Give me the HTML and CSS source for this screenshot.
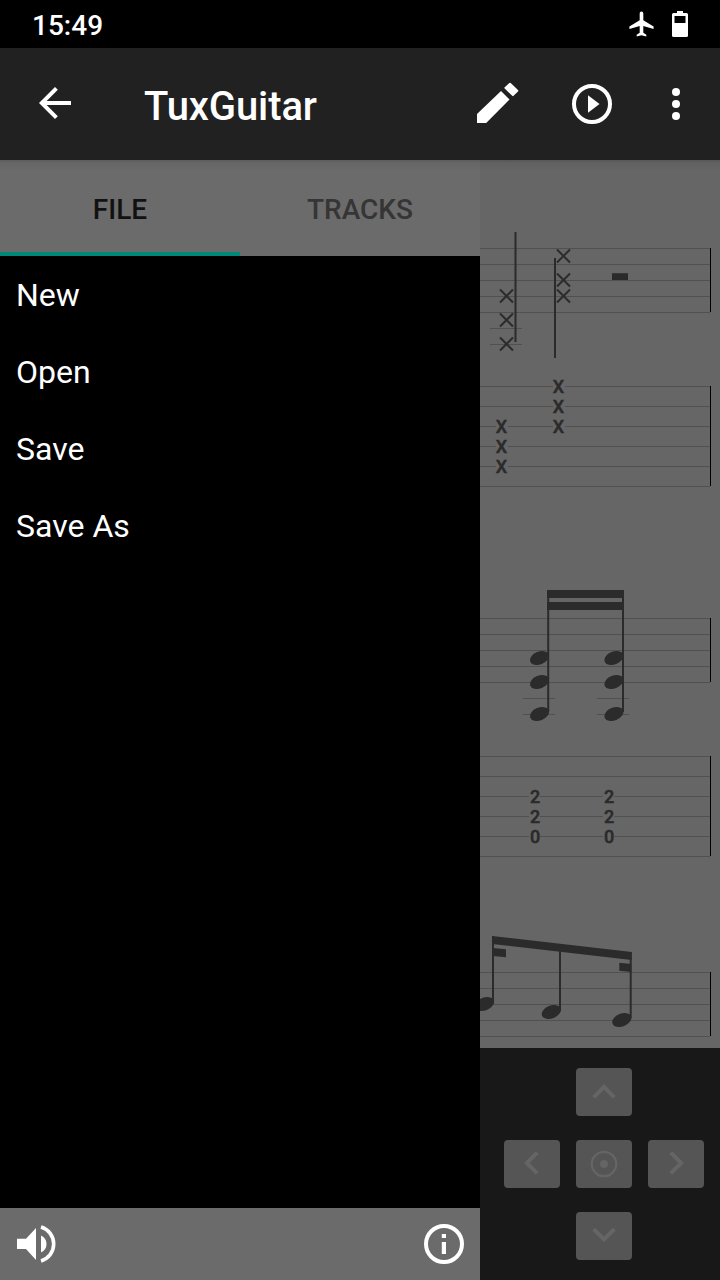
FILE: index.html
```html
<!DOCTYPE html>
<html lang="en">
<head>
<meta charset="utf-8">
<title>TuxGuitar</title>
<link rel="stylesheet" href="styles.css">
</head>
<body>
<div class="screen">
  <div class="status-bar">
    <span class="clock">15:49</span>
    <svg class="airplane" width="29" height="30" viewBox="0 0 24 24" preserveAspectRatio="none"><path d="M22 16v-2l-8.500-5V3.500C13.500 2.670 12.830 2 12 2s-1.500.67-1.500 1.500V9L2 14v2l8.500-2.500V19L8 20.500V22l4-1 4 1v-1.500L13.500 19v-5.500L22 16z"/></svg>
    <svg class="battery" width="16" height="26" viewBox="0 0 16 26"><path fill-rule="evenodd" d="M5 0h6v2h3.500a1.500 1.500 0 0 1 1.500 1.500v21a1.500 1.500 0 0 1-1.500 1.500h-13A1.500 1.500 0 0 1 0 24.500v-21A1.500 1.500 0 0 1 1.500 2H5zM2.500 5v7h11V5z"/></svg>
  </div>

  <header class="app-bar">
    <svg class="back" width="48" height="48" viewBox="0 0 24 24"><path d="M20 11H7.830l5.590-5.590L12 4l-8 8 8 8 1.410-1.410L7.830 13H20z"/></svg>
    <h1 class="title">TuxGuitar</h1>
    <svg class="action" width="48" height="48" viewBox="0 0 48 48"><path d="M4 34v9h9.200l23.300-23.500-8.500-8.500z"/><path class="eraser" d="M37 3.700l7.300 7.100-4.400 4.300-7.500-7.200z"/></svg>
    <svg class="action action-play" width="48" height="48" viewBox="0 0 48 48"><circle class="ring" cx="24" cy="24" r="18"/><path d="M20 15.200v17.600L31.500 24z"/></svg>
    <svg class="overflow" width="8" height="32" viewBox="0 0 8 32"><circle cx="4" cy="4" r="4"/><circle cx="4" cy="16" r="4"/><circle cx="4" cy="28" r="4"/></svg>
  </header>

  <div class="body">
    <aside class="drawer">
      <nav class="tabs">
        <span class="tab tab-active">FILE</span>
        <span class="tab">TRACKS</span>
      </nav>
      <ul class="menu">
        <li class="menu-item">New</li>
        <li class="menu-item">Open</li>
        <li class="menu-item">Save</li>
        <li class="menu-item">Save As</li>
      </ul>
      <footer class="drawer-footer">
        <svg width="40" height="40" viewBox="0 0 40 40"><path d="M1 14.700h9L20 4v32L10 25H1zM25 11.500q5.500 2.500 5.500 8.500T25 28.500z"/><path class="wave" d="M25 3.100a17.600 17.600 0 0 1 0 33.800"/></svg>
        <svg width="40" height="40" viewBox="0 0 40 40"><circle class="ring" cx="20" cy="20" r="18"/><path d="M17.800 10h4.200v4h-4.200zM17.800 18h4.200v12h-4.200z"/></svg>
      </footer>
    </aside>

    <main class="content">
      <svg class="score" width="240" height="888" viewBox="480 160 240 888">
        <defs>
          <ellipse id="head" rx="10" ry="6.400" transform="rotate(-22)"/>
          <path id="cross" class="cross" d="M-6.500-6.500 6.500 6.500M6.500-6.500-6.500 6.500"/>
        </defs>
        <path class="line" d="M480 248.500h230M480 264.500h230M480 280.500h230M480 296.500h230M480 312.500h230M490 328.500h32M490 344.500h32"/>
        <path class="line" d="M480 386.500h73m12 0h145M480 406.500h73m12 0h145M480 426.500h16m12 0h45m12 0h145M480 446.500h16m12 0h202M480 466.500h16m12 0h202M480 486.500h230"/>
        <path class="line" d="M480 618.500h230M480 634.500h230M480 650.500h230M480 666.500h230M480 682.500h230M523 698.500h32M597 698.500h32M523 714.500h32M597 714.500h32"/>
        <path class="line" d="M480 756.500h230M480 776.500h230M480 796.500h49m11 0h63m11 0h96M480 816.500h49m11 0h63m11 0h96M480 836.500h49m11 0h63m11 0h96M480 856.500h230"/>
        <path class="line" d="M480 972.500h230M480 988.500h230M480 1004.500h230M480 1020.500h230M480 1036.500h230"/>
        <path class="bar" d="M710.500 248v64M710.500 386v100M710.500 618v64M710.500 756v100M710.500 972v64"/>

        <use href="#cross" x="506.500" y="296"/><use href="#cross" x="506.500" y="320"/><use href="#cross" x="506.500" y="344"/>
        <use href="#cross" x="563.500" y="256"/><use href="#cross" x="563.500" y="280"/><use href="#cross" x="563.500" y="296"/>
        <path class="stem" d="M515.500 232v110M555 258v100"/>
        <path d="M612 273.200h16v6.800h-16z"/>

        <path d="M547 590h77v8h-77zM547 602h77v8h-77z"/>
        <path class="stem" d="M548.200 590v122M623 590v122"/>
        <use href="#head" x="539.500" y="658"/><use href="#head" x="539.500" y="682"/><use href="#head" x="539.500" y="714"/>
        <use href="#head" x="613.900" y="658"/><use href="#head" x="613.900" y="682"/><use href="#head" x="613.900" y="714"/>

        <path d="M492 936l139.700 16v8L492 944zM493 948l13 1.300v8l-13-1.300zM619.300 962.800l12 1.200v8l-12-1.300z"/>
        <path class="stem" d="M493 936v66M560 948v63M630.700 952v66"/>
        <use href="#head" x="484.500" y="1004"/><use href="#head" x="551.300" y="1012"/><use href="#head" x="621.800" y="1020"/>

        <g class="frets">
          <text x="501.500" y="433">X</text><text x="501.500" y="453">X</text><text x="501.500" y="473">X</text>
          <text x="558.500" y="393">X</text><text x="558.500" y="413">X</text><text x="558.500" y="433">X</text>
          <text x="535.200" y="803">2</text><text x="535.200" y="823">2</text><text x="535.200" y="843">0</text>
          <text x="609.200" y="803">2</text><text x="609.200" y="823">2</text><text x="609.200" y="843">0</text>
        </g>
      </svg>
      <div class="pad">
        <button class="key key-up"><svg width="56" height="48"><path d="M17.700 29.300 28 18.900l10.300 10.400"/></svg></button>
        <button class="key key-left"><svg width="56" height="48"><path d="M33.200 12.600 22.800 23l10.400 10.400"/></svg></button>
        <button class="key"><svg width="56" height="48"><circle class="target" cx="28" cy="24" r="12.200"/><circle class="dot" cx="28" cy="24" r="4"/></svg></button>
        <button class="key"><svg width="56" height="48"><path d="M22.800 12.600 33.200 23 22.800 33.400"/></svg></button>
        <button class="key key-down"><svg width="56" height="48"><path d="M17.700 17.100 28 27.500l10.300-10.400"/></svg></button>
      </div>
    </main>
  </div>
</div>
</body>
</html>
```

FILE: styles.css
```css
* {
  box-sizing: border-box;
}

body {
  margin: 0;
  background: #000;
  font-family: Roboto, "Liberation Sans", sans-serif;
}

svg {
  display: block;
  flex: none;
}

.screen {
  display: flex;
  flex-direction: column;
  width: 720px;
  height: 1280px;
  overflow: hidden;
}

.status-bar {
  display: flex;
  align-items: center;
  height: 48px;
  padding: 0 32px;
  color: #fff;
  fill: #fff;
}

.clock {
  margin-right: auto;
  padding-top: 4px;
  font-size: 28px;
  font-weight: 500;
  line-height: 32px;
}

.airplane {
  margin-right: 16px;
}

.app-bar {
  display: flex;
  align-items: center;
  height: 112px;
  padding: 0 40px 0 31px;
  background: #212121;
  color: #fff;
  fill: #fff;
}

.back {
  margin-bottom: 2px;
}

.title {
  flex: 1;
  margin: 0 0 0 65px;
  padding-top: 6px;
  font-size: 40px;
  font-weight: 500;
  letter-spacing: -0.1px;
  line-height: 48px;
}

.action {
  margin-right: 47px;
}

.action-play {
  margin-right: 56px;
}

.eraser {
  stroke: #fff;
  stroke-width: 2;
  stroke-linejoin: round;
}

.ring,
.wave {
  fill: none;
  stroke: #fff;
  stroke-width: 4;
}

.wave {
  stroke-width: 3.6;
}

.body {
  display: flex;
  flex: 1;
}

.drawer {
  display: flex;
  flex-direction: column;
  width: 480px;
}

.tabs {
  display: flex;
  height: 96px;
  background: linear-gradient(#5c5c5c, #666 3px, #6b6b6b 12px);
}

.tab {
  flex: 1;
  padding-top: 34px;
  border-bottom: 4px solid transparent;
  color: #353535;
  font-size: 28px;
  font-weight: 500;
  line-height: 32px;
  text-align: center;
}

.tab-active {
  border-color: #00897b;
  color: #111;
}

.menu {
  flex: 1;
  margin: 0;
  padding: 1px 0 0;
  list-style: none;
}

.menu-item {
  height: 77px;
  padding-left: 16px;
  color: #fff;
  font-size: 32px;
  line-height: 77px;
}

.drawer-footer {
  display: flex;
  align-items: center;
  justify-content: space-between;
  height: 72px;
  padding: 0 16px;
  background: #6b6b6b;
  fill: #fff;
}

.content {
  width: 240px;
}

.score {
  background: linear-gradient(#575757, #616161 3px, #666 12px);
  fill: #2b2b2b;
}

.line {
  stroke: #505050;
}

.bar {
  stroke: #000;
}

.cross,
.stem {
  fill: none;
  stroke: #2b2b2b;
  stroke-width: 2;
}

.frets {
  font-size: 18px;
  font-weight: 500;
  stroke: #2b2b2b;
  stroke-width: 0.5;
  text-anchor: middle;
}

.pad {
  display: grid;
  grid-template-columns: repeat(3, 56px);
  grid-auto-rows: 48px;
  gap: 24px 16px;
  height: 232px;
  padding: 20px 16px 20px 24px;
  background: #181818;
}

.key {
  padding: 0;
  border: 0;
  border-radius: 4px;
  background: #555;
  fill: none;
  stroke: #656565;
  stroke-width: 4;
}

.key-up,
.key-down {
  grid-column: 2;
}

.key-left {
  grid-column: 1;
}

.target {
  stroke-width: 2.3;
}

.dot {
  fill: #656565;
  stroke: none;
}
```
